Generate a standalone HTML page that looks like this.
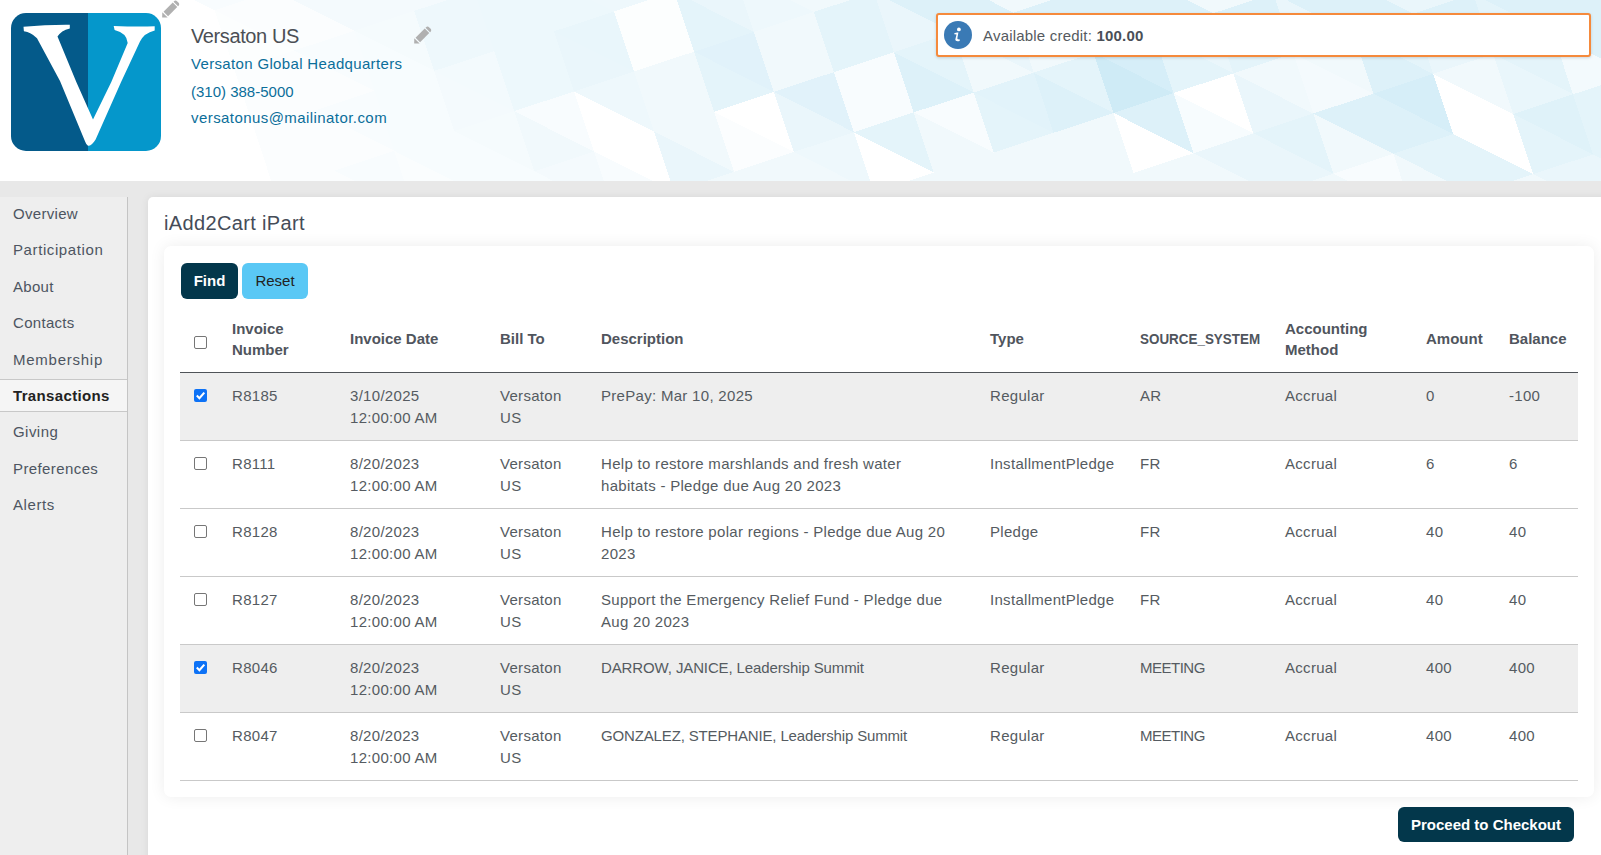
<!DOCTYPE html>
<html><head><meta charset="utf-8"><style>
*{box-sizing:border-box;margin:0;padding:0}
html,body{width:1601px;height:855px;overflow:hidden;background:#fff;font-family:"Liberation Sans",sans-serif}
.abs{position:absolute;white-space:nowrap}
#hdr{position:absolute;left:0;top:0;width:1601px;height:181px;overflow:hidden;background:#fff}
#band{position:absolute;left:0;top:181px;width:1601px;height:674px;background:#e8e8e8}
#side{position:absolute;left:0;top:197px;width:128px;height:658px;background:#eeeeee;border-right:1px solid #c4c4c4}
#gap{position:absolute;left:128px;top:197px;width:20px;height:658px;background:#e8e8e8}
#main{position:absolute;left:148px;top:197px;width:1460px;height:670px;background:#fff;border-top-left-radius:5px;box-shadow:0 0 8px rgba(0,0,0,0.07)}
.nav{position:absolute;left:13px;font-size:15px;letter-spacing:0.3px;color:#4d5561}
.card{position:absolute;left:164px;top:246px;width:1430px;height:551px;background:#fff;border-radius:7px;box-shadow:0 0 16px rgba(0,0,0,0.075)}
.btn{position:absolute;border-radius:6px;font-size:15px;text-align:center}
.th{position:absolute;font-size:15px;font-weight:bold;color:#50555d;line-height:21px;white-space:nowrap}
.td{position:absolute;font-size:15px;color:#555b61;line-height:22px;letter-spacing:0.3px;white-space:nowrap}
.row{position:absolute;left:180px;width:1398px;height:68px;border-bottom:1px solid #c9c9c9}
.cb{position:absolute;width:13px;height:13px;border:1px solid #767676;border-radius:2px;background:#fff}
.cbc{position:absolute;width:13px;height:13px;border-radius:2px;background:#0d72f6}
</style></head>
<body>
<div id="hdr"><svg width="1601" height="181" style="position:absolute;left:0;top:0" shape-rendering="crispEdges"><polygon points="254.5,130.4 334.4,170.7 274.5,190.5" fill="#fbfdfe"/><polygon points="274.5,190.5 334.4,170.7 354.4,230.8" fill="#fbfdfe"/><polygon points="334.4,170.7 414.3,211.0 354.4,230.8" fill="#fbfdfe"/><polygon points="234.5,70.4 314.4,110.6 254.5,130.4" fill="#fbfdfe"/><polygon points="254.5,130.4 314.4,110.6 334.4,170.7" fill="#fbfdfe"/><polygon points="314.4,110.6 394.3,150.9 334.4,170.7" fill="#fbfdfe"/><polygon points="334.4,170.7 394.3,150.9 414.3,211.0" fill="#f8fcfe"/><polygon points="394.3,150.9 474.3,191.1 414.3,211.0" fill="#fafdfe"/><polygon points="214.5,10.3 294.4,50.5 234.5,70.4" fill="#fcfefe"/><polygon points="234.5,70.4 294.4,50.5 314.4,110.6" fill="#fbfdfe"/><polygon points="294.4,50.5 374.3,90.8 314.4,110.6" fill="#fbfdfe"/><polygon points="314.4,110.6 374.3,90.8 394.3,150.9" fill="#f8fcfe"/><polygon points="374.3,90.8 454.3,131.0 394.3,150.9" fill="#f7fcfe"/><polygon points="394.3,150.9 454.3,131.0 474.3,191.1" fill="#f7fcfe"/><polygon points="454.3,131.0 534.2,171.3 474.3,191.1" fill="#f7fcfe"/><polygon points="474.3,191.1 534.2,171.3 554.2,231.4" fill="#f7fcfe"/><polygon points="534.2,171.3 614.1,211.5 554.2,231.4" fill="#f7fcfe"/><polygon points="134.6,-30.0 194.5,-49.8 214.5,10.3" fill="#f8fcfe"/><polygon points="194.5,-49.8 274.4,-9.6 214.5,10.3" fill="#f8fcfe"/><polygon points="214.5,10.3 274.4,-9.6 294.4,50.5" fill="#fbfdfe"/><polygon points="274.4,-9.6 354.3,30.7 294.4,50.5" fill="#fbfdfe"/><polygon points="294.4,50.5 354.3,30.7 374.3,90.8" fill="#f8fcfe"/><polygon points="354.3,30.7 434.3,70.9 374.3,90.8" fill="#f7fcfe"/><polygon points="374.3,90.8 434.3,70.9 454.3,131.0" fill="#f7fcfe"/><polygon points="434.3,70.9 514.2,111.2 454.3,131.0" fill="#f4fafd"/><polygon points="454.3,131.0 514.2,111.2 534.2,171.3" fill="#f5fbfd"/><polygon points="514.2,111.2 594.1,151.5 534.2,171.3" fill="#f1f9fc"/><polygon points="534.2,171.3 594.1,151.5 614.1,211.5" fill="#f4fafd"/><polygon points="594.1,151.5 674.0,191.7 614.1,211.5" fill="#f8fcfe"/><polygon points="274.4,-9.6 334.4,-29.4 354.3,30.7" fill="#f4fafd"/><polygon points="334.4,-29.4 414.3,10.9 354.3,30.7" fill="#f4fafd"/><polygon points="354.3,30.7 414.3,10.9 434.3,70.9" fill="#f5fbfd"/><polygon points="414.3,10.9 494.2,51.1 434.3,70.9" fill="#eef8fc"/><polygon points="434.3,70.9 494.2,51.1 514.2,111.2" fill="#f3fafd"/><polygon points="494.2,51.1 574.1,91.4 514.2,111.2" fill="#edf8fc"/><polygon points="514.2,111.2 574.1,91.4 594.1,151.5" fill="#f8fcfe"/><polygon points="654.0,131.6 734.0,171.9 674.0,191.7" fill="#eaf6fb"/><polygon points="674.0,191.7 734.0,171.9 754.0,232.0" fill="#f1f9fc"/><polygon points="734.0,171.9 813.9,212.1 754.0,232.0" fill="#f1f9fc"/><polygon points="334.4,-29.4 394.3,-49.2 414.3,10.9" fill="#f4fafd"/><polygon points="394.3,-49.2 474.2,-9.0 414.3,10.9" fill="#f4fafd"/><polygon points="414.3,10.9 474.2,-9.0 494.2,51.1" fill="#eef8fc"/><polygon points="474.2,-9.0 554.1,31.3 494.2,51.1" fill="#edf8fc"/><polygon points="494.2,51.1 554.1,31.3 574.1,91.4" fill="#edf8fc"/><polygon points="554.1,31.3 634.1,71.5 574.1,91.4" fill="#eaf6fb"/><polygon points="574.1,91.4 634.1,71.5 654.0,131.6" fill="#eef8fc"/><polygon points="634.1,71.5 714.0,111.8 654.0,131.6" fill="#f1f9fc"/><polygon points="654.0,131.6 714.0,111.8 734.0,171.9" fill="#f1f9fc"/><polygon points="714.0,111.8 793.9,152.0 734.0,171.9" fill="#fbfdfe"/><polygon points="734.0,171.9 793.9,152.0 813.9,212.1" fill="#f1f9fc"/><polygon points="793.9,152.0 873.8,192.3 813.9,212.1" fill="#f1f9fc"/><polygon points="474.2,-9.0 534.1,-28.8 554.1,31.3" fill="#edf8fc"/><polygon points="534.1,-28.8 614.1,11.4 554.1,31.3" fill="#edf8fc"/><polygon points="554.1,31.3 614.1,11.4 634.1,71.5" fill="#e9f6fb"/><polygon points="614.1,11.4 694.0,51.7 634.1,71.5" fill="#fcfefe"/><polygon points="634.1,71.5 694.0,51.7 714.0,111.8" fill="#f1f9fc"/><polygon points="694.0,51.7 773.9,91.9 714.0,111.8" fill="#e4f4fa"/><polygon points="773.9,91.9 853.8,132.2 793.9,152.0" fill="#eaf6fb"/><polygon points="793.9,152.0 853.8,132.2 873.8,192.3" fill="#eef8fc"/><polygon points="873.8,192.3 933.8,172.5 953.8,232.5" fill="#f1f9fc"/><polygon points="933.8,172.5 1013.7,212.7 953.8,232.5" fill="#f1f9fc"/><polygon points="534.1,-28.8 594.1,-48.6 614.1,11.4" fill="#eef8fc"/><polygon points="594.1,-48.6 674.0,-8.4 614.1,11.4" fill="#eef8fc"/><polygon points="614.1,11.4 674.0,-8.4 694.0,51.7" fill="#fcfefe"/><polygon points="674.0,-8.4 753.9,31.9 694.0,51.7" fill="#e4f4fa"/><polygon points="694.0,51.7 753.9,31.9 773.9,91.9" fill="#e1f2fa"/><polygon points="753.9,31.9 833.8,72.1 773.9,91.9" fill="#f1f9fc"/><polygon points="773.9,91.9 833.8,72.1 853.8,132.2" fill="#e1f2fa"/><polygon points="833.8,72.1 913.8,112.4 853.8,132.2" fill="#f8fcfe"/><polygon points="853.8,132.2 913.8,112.4 933.8,172.5" fill="#e4f4fa"/><polygon points="913.8,112.4 993.7,152.6 933.8,172.5" fill="#f1f9fc"/><polygon points="933.8,172.5 993.7,152.6 1013.7,212.7" fill="#f1f9fc"/><polygon points="993.7,152.6 1073.6,192.9 1013.7,212.7" fill="#f1f9fc"/><polygon points="674.0,-8.4 733.9,-28.2 753.9,31.9" fill="#eaf6fb"/><polygon points="733.9,-28.2 813.8,12.0 753.9,31.9" fill="#eef8fc"/><polygon points="753.9,31.9 813.8,12.0 833.8,72.1" fill="#f1f9fc"/><polygon points="813.8,12.0 893.8,52.3 833.8,72.1" fill="#e4f4fa"/><polygon points="833.8,72.1 893.8,52.3 913.8,112.4" fill="#f8fcfe"/><polygon points="893.8,52.3 973.7,92.5 913.8,112.4" fill="#ddf1f9"/><polygon points="913.8,112.4 973.7,92.5 993.7,152.6" fill="#f8fcfe"/><polygon points="973.7,92.5 1053.6,132.8 993.7,152.6" fill="#e4f4fa"/><polygon points="993.7,152.6 1053.6,132.8 1073.6,192.9" fill="#f1f9fc"/><polygon points="1053.6,132.8 1133.5,173.0 1073.6,192.9" fill="#f1f9fc"/><polygon points="1073.6,192.9 1133.5,173.0 1153.5,233.1" fill="#f1f9fc"/><polygon points="1133.5,173.0 1213.5,213.3 1153.5,233.1" fill="#f1f9fc"/><polygon points="733.9,-28.2 793.9,-48.1 813.8,12.0" fill="#f1f9fc"/><polygon points="793.9,-48.1 873.8,-7.8 813.8,12.0" fill="#f1f9fc"/><polygon points="813.8,12.0 873.8,-7.8 893.8,52.3" fill="#e4f4fa"/><polygon points="873.8,-7.8 953.7,32.4 893.8,52.3" fill="#eaf6fb"/><polygon points="893.8,52.3 953.7,32.4 973.7,92.5" fill="#e4f4fa"/><polygon points="953.7,32.4 1033.6,72.7 973.7,92.5" fill="#f1f9fc"/><polygon points="973.7,92.5 1033.6,72.7 1053.6,132.8" fill="#e2f3fa"/><polygon points="1033.6,72.7 1113.6,113.0 1053.6,132.8" fill="#ddf1f9"/><polygon points="1053.6,132.8 1113.6,113.0 1133.5,173.0" fill="#f1f9fc"/><polygon points="1133.5,173.0 1193.5,153.2 1213.5,213.3" fill="#f1f9fc"/><polygon points="1193.5,153.2 1273.4,193.5 1213.5,213.3" fill="#f1f9fc"/><polygon points="873.8,-7.8 933.7,-27.6 953.7,32.4" fill="#ddf1f9"/><polygon points="933.7,-27.6 1013.6,12.6 953.7,32.4" fill="#ddf1f9"/><polygon points="953.7,32.4 1013.6,12.6 1033.6,72.7" fill="#eaf6fb"/><polygon points="1013.6,12.6 1093.6,52.9 1033.6,72.7" fill="#f1f9fc"/><polygon points="1033.6,72.7 1093.6,52.9 1113.6,113.0" fill="#e4f4fa"/><polygon points="1093.6,52.9 1173.5,93.1 1113.6,113.0" fill="#cfebf6"/><polygon points="1113.6,113.0 1173.5,93.1 1193.5,153.2" fill="#ddf1f9"/><polygon points="1173.5,93.1 1253.4,133.4 1193.5,153.2" fill="#f7fcfe"/><polygon points="1193.5,153.2 1253.4,133.4 1273.4,193.5" fill="#eaf6fb"/><polygon points="1253.4,133.4 1333.3,173.6 1273.4,193.5" fill="#eaf6fb"/><polygon points="1273.4,193.5 1333.3,173.6 1353.3,233.7" fill="#f1f9fc"/><polygon points="1333.3,173.6 1413.3,213.9 1353.3,233.7" fill="#f1f9fc"/><polygon points="933.7,-27.6 993.6,-47.5 1013.6,12.6" fill="#f1f9fc"/><polygon points="993.6,-47.5 1073.6,-7.2 1013.6,12.6" fill="#f1f9fc"/><polygon points="1013.6,12.6 1073.6,-7.2 1093.6,52.9" fill="#ddf1f9"/><polygon points="1073.6,-7.2 1153.5,33.0 1093.6,52.9" fill="#ddf1f9"/><polygon points="1093.6,52.9 1153.5,33.0 1173.5,93.1" fill="#d6eef8"/><polygon points="1153.5,33.0 1233.4,73.3 1173.5,93.1" fill="#e4f4fa"/><polygon points="1233.4,73.3 1313.3,113.5 1253.4,133.4" fill="#eaf6fb"/><polygon points="1253.4,133.4 1313.3,113.5 1333.3,173.6" fill="#e4f4fa"/><polygon points="1313.3,113.5 1393.3,153.8 1333.3,173.6" fill="#f1f9fc"/><polygon points="1333.3,173.6 1393.3,153.8 1413.3,213.9" fill="#f8fcfe"/><polygon points="1393.3,153.8 1473.2,194.0 1413.3,213.9" fill="#f1f9fc"/><polygon points="1073.6,-7.2 1133.5,-27.1 1153.5,33.0" fill="#ddf1f9"/><polygon points="1133.5,-27.1 1213.4,13.2 1153.5,33.0" fill="#ddf1f9"/><polygon points="1153.5,33.0 1213.4,13.2 1233.4,73.3" fill="#eaf6fb"/><polygon points="1213.4,13.2 1293.3,53.5 1233.4,73.3" fill="#e4f4fa"/><polygon points="1233.4,73.3 1293.3,53.5 1313.3,113.5" fill="#f1f9fc"/><polygon points="1293.3,53.5 1373.3,93.7 1313.3,113.5" fill="#f4fafd"/><polygon points="1313.3,113.5 1373.3,93.7 1393.3,153.8" fill="#ddf1f9"/><polygon points="1373.3,93.7 1453.2,134.0 1393.3,153.8" fill="#ddf1f9"/><polygon points="1393.3,153.8 1453.2,134.0 1473.2,194.0" fill="#e4f4fa"/><polygon points="1453.2,134.0 1533.1,174.2 1473.2,194.0" fill="#e4f4fa"/><polygon points="1473.2,194.0 1533.1,174.2 1553.1,234.3" fill="#f1f9fc"/><polygon points="1533.1,174.2 1613.0,214.5 1553.1,234.3" fill="#f1f9fc"/><polygon points="1133.5,-27.1 1193.4,-46.9 1213.4,13.2" fill="#f1f9fc"/><polygon points="1193.4,-46.9 1273.4,-6.6 1213.4,13.2" fill="#f1f9fc"/><polygon points="1213.4,13.2 1273.4,-6.6 1293.3,53.5" fill="#ddf1f9"/><polygon points="1273.4,-6.6 1353.3,33.6 1293.3,53.5" fill="#eaf6fb"/><polygon points="1293.3,53.5 1353.3,33.6 1373.3,93.7" fill="#f1f9fc"/><polygon points="1353.3,33.6 1433.2,73.9 1373.3,93.7" fill="#ddf1f9"/><polygon points="1373.3,93.7 1433.2,73.9 1453.2,134.0" fill="#d6eef8"/><polygon points="1513.1,114.1 1593.0,154.4 1533.1,174.2" fill="#e4f4fa"/><polygon points="1533.1,174.2 1593.0,154.4 1613.0,214.5" fill="#eaf6fb"/><polygon points="1593.0,154.4 1673.0,194.6 1613.0,214.5" fill="#eaf6fb"/><polygon points="1273.4,-6.6 1333.3,-26.5 1353.3,33.6" fill="#ddf1f9"/><polygon points="1333.3,-26.5 1413.2,13.8 1353.3,33.6" fill="#ddf1f9"/><polygon points="1353.3,33.6 1413.2,13.8 1433.2,73.9" fill="#e4f4fa"/><polygon points="1413.2,13.8 1493.1,54.0 1433.2,73.9" fill="#eaf6fb"/><polygon points="1433.2,73.9 1493.1,54.0 1513.1,114.1" fill="#f1f9fc"/><polygon points="1493.1,54.0 1573.1,94.3 1513.1,114.1" fill="#e9f6fb"/><polygon points="1513.1,114.1 1573.1,94.3 1593.0,154.4" fill="#dff2f9"/><polygon points="1573.1,94.3 1653.0,134.5 1593.0,154.4" fill="#e4f4fa"/><polygon points="1593.0,154.4 1653.0,134.5 1673.0,194.6" fill="#e4f4fa"/><polygon points="1333.3,-26.5 1393.2,-46.3 1413.2,13.8" fill="#eaf6fb"/><polygon points="1393.2,-46.3 1473.1,-6.0 1413.2,13.8" fill="#eaf6fb"/><polygon points="1413.2,13.8 1473.1,-6.0 1493.1,54.0" fill="#ddf1f9"/><polygon points="1473.1,-6.0 1553.1,34.2 1493.1,54.0" fill="#e4f4fa"/><polygon points="1493.1,54.0 1553.1,34.2 1573.1,94.3" fill="#e4f4fa"/><polygon points="1553.1,34.2 1633.0,74.5 1573.1,94.3" fill="#f3fafd"/><polygon points="1573.1,94.3 1633.0,74.5 1653.0,134.5" fill="#e4f4fa"/><polygon points="1473.1,-6.0 1533.1,-25.9 1553.1,34.2" fill="#ddf1f9"/><polygon points="1533.1,-25.9 1613.0,14.4 1553.1,34.2" fill="#ddf1f9"/><polygon points="1553.1,34.2 1613.0,14.4 1633.0,74.5" fill="#ddf1f9"/><polygon points="1533.1,-25.9 1593.0,-45.7 1613.0,14.4" fill="#ddf1f9"/><polygon points="1593.0,-45.7 1672.9,-5.5 1613.0,14.4" fill="#ddf1f9"/></svg></div>
<div id="band"></div><div id="side"></div><div id="gap"></div><div id="main"></div>
<svg class="abs" style="left:11px;top:13px" width="150" height="138" viewBox="0 0 150 138">
<defs><clipPath id="lc"><rect x="0" y="0" width="150" height="138" rx="15" ry="15"/></clipPath></defs>
<g clip-path="url(#lc)"><rect x="0" y="0" width="77" height="138" fill="#045a8a"/><rect x="77" y="0" width="73" height="138" fill="#0597cb"/></g>
<path fill="#fff" d="M12.5 13.7 Q36 11.5 58.8 11.7 L58.8 15.4 Q50 17.5 46.5 23.6 L65.3 69 L82 106.5 L100.3 69 L116.7 30.1 Q116 20 103.6 17 L102.7 12.9 Q124 13.8 143.7 13.3 L143.7 17.4 Q133 20 129 28.5 L110.1 69 L84.6 126.6 Q80 134 76.7 132.4 Q75 131 74.1 128.4 L49 68 L26 25.2 Q20 19 12.9 18.2 Z"/>
</svg>
<svg style="position:absolute;left:162px;top:0px" width="18" height="18" viewBox="0 0 18 18">
<g fill="#b0b0b0" transform="translate(0.2,17.6) rotate(-45)">
<path d="M0 0 L3.9 -3.8 L3.9 3.8 Z"/>
<rect x="5.1" y="-3.2" width="13" height="6.4"/>
<path d="M19.2 -3.2 L19.6 -3.2 Q22.1 -3.2 22.1 -0.8 L22.1 0.8 Q22.1 3.2 19.6 3.2 L19.2 3.2 Z"/>
</g></svg>
<svg style="position:absolute;left:414px;top:26px" width="18" height="18" viewBox="0 0 18 18">
<g fill="#b0b0b0" transform="translate(0.2,17.6) rotate(-45)">
<path d="M0 0 L3.9 -3.8 L3.9 3.8 Z"/>
<rect x="5.1" y="-3.2" width="13" height="6.4"/>
<path d="M19.2 -3.2 L19.6 -3.2 Q22.1 -3.2 22.1 -0.8 L22.1 0.8 Q22.1 3.2 19.6 3.2 L19.2 3.2 Z"/>
</g></svg>
<div class="abs" style="left:191px;top:23.6px;font-size:20px;letter-spacing:-0.4px;color:#4b4f55;line-height:24px">Versaton US</div>
<div class="abs" style="left:191px;top:54.4px;font-size:15px;letter-spacing:0.34px;color:#0b6e9a;line-height:20px">Versaton Global Headquarters</div>
<div class="abs" style="left:191px;top:81.5px;font-size:15px;letter-spacing:0px;color:#0b6e9a;line-height:20px">(310) 388-5000</div>
<div class="abs" style="left:191px;top:107.6px;font-size:15px;letter-spacing:0.43px;color:#0b6e9a;line-height:20px">versatonus@mailinator.com</div>
<div class="abs" style="left:936px;top:13px;width:655px;height:44px;background:#fff;border:2px solid #f58a3c;border-radius:3px;box-shadow:0 1px 3px rgba(0,0,0,0.15)"></div>
<svg class="abs" style="left:944px;top:21px" width="28" height="28" viewBox="0 0 28 28"><circle cx="14" cy="14" r="14" fill="#3a7ab5"/><circle cx="14.9" cy="8.4" r="1.9" fill="#fff"/><path fill="#fff" d="M10.1 12.5 Q12.3 11.1 14.4 11.5 L13.3 17.4 Q13.2 18.5 15.9 18.6 L15.6 19.9 Q11.2 20.8 11.3 18.4 L12.5 13.6 Q11.5 13.2 10.3 13.3 Z"/></svg>
<div class="abs" style="left:983px;top:26px;font-size:15px;letter-spacing:0.2px;color:#555a60;line-height:20px">Available credit: <b style="color:#4a4f57">100.00</b></div>
<div class="nav" style="top:204.0px;line-height:20px;letter-spacing:0.3px">Overview</div>
<div class="nav" style="top:240.4px;line-height:20px;letter-spacing:0.6px">Participation</div>
<div class="nav" style="top:276.8px;line-height:20px;letter-spacing:0.3px">About</div>
<div class="nav" style="top:313.2px;line-height:20px;letter-spacing:0.3px">Contacts</div>
<div class="nav" style="top:349.6px;line-height:20px;letter-spacing:0.75px">Membership</div>
<div class="abs" style="left:0;top:379px;width:127px;height:33px;background:#f5f5f5;border-top:1px solid #c8c8c8;border-bottom:1px solid #c8c8c8"></div>
<div class="nav" style="top:386.0px;line-height:20px;font-weight:bold;color:#222;letter-spacing:0.35px">Transactions</div>
<div class="nav" style="top:422.4px;line-height:20px;letter-spacing:0.45px">Giving</div>
<div class="nav" style="top:458.79999999999995px;line-height:20px;letter-spacing:0.4px">Preferences</div>
<div class="nav" style="top:495.2px;line-height:20px;letter-spacing:0.6px">Alerts</div>
<div class="abs" style="left:164px;top:211px;font-size:20px;color:#454c58;line-height:24px;letter-spacing:0.35px">iAdd2Cart iPart</div>
<div class="card"></div>
<div class="btn" style="left:181px;top:263px;width:57px;height:36px;background:#03374b;color:#fff;font-weight:bold;line-height:36px">Find</div>
<div class="btn" style="left:242px;top:263px;width:66px;height:36px;background:#5ac8f5;color:#222;line-height:36px">Reset</div>
<div class="abs" style="left:180px;top:372px;width:1398px;height:1px;background:#4f5358"></div>
<div class="cb" style="left:194px;top:336px"></div>
<div class="th" style="left:232px;top:318.2px;">Invoice<br>Number</div>
<div class="th" style="left:350px;top:328.3px;">Invoice Date</div>
<div class="th" style="left:500px;top:328.3px;">Bill To</div>
<div class="th" style="left:601px;top:328.3px;">Description</div>
<div class="th" style="left:990px;top:328.3px;">Type</div>
<div class="th" style="left:1140px;top:328.3px;transform:scaleX(0.895);transform-origin:0 0;">SOURCE_SYSTEM</div>
<div class="th" style="left:1285px;top:318.2px;">Accounting<br>Method</div>
<div class="th" style="left:1426px;top:328.3px;">Amount</div>
<div class="th" style="left:1509px;top:328.3px;">Balance</div>
<div class="row" style="top:373px;background:#eeeeee"></div>
<div class="cbc" style="left:194px;top:389px"><svg width="13" height="13" viewBox="0 0 13 13" style="position:absolute;left:0;top:0"><path d="M2.8 6.6 L5.4 9.2 L10.3 3.6" fill="none" stroke="#fff" stroke-width="2.1"/></svg></div>
<div class="td" style="left:232px;top:385px;">R8185</div>
<div class="td" style="left:350px;top:385px;">3/10/2025<br>12:00:00 AM</div>
<div class="td" style="left:500px;top:385px;">Versaton<br>US</div>
<div class="td" style="left:601px;top:385px;">PrePay: Mar 10, 2025</div>
<div class="td" style="left:990px;top:385px;">Regular</div>
<div class="td" style="left:1140px;top:385px;">AR</div>
<div class="td" style="left:1285px;top:385px;">Accrual</div>
<div class="td" style="left:1426px;top:385px;">0</div>
<div class="td" style="left:1509px;top:385px;">-100</div>
<div class="row" style="top:441px;background:#fff"></div>
<div class="cb" style="left:194px;top:457px"></div>
<div class="td" style="left:232px;top:453px;">R8111</div>
<div class="td" style="left:350px;top:453px;">8/20/2023<br>12:00:00 AM</div>
<div class="td" style="left:500px;top:453px;">Versaton<br>US</div>
<div class="td" style="left:601px;top:453px;">Help to restore marshlands and fresh water<br>habitats - Pledge due Aug 20 2023</div>
<div class="td" style="left:990px;top:453px;">InstallmentPledge</div>
<div class="td" style="left:1140px;top:453px;">FR</div>
<div class="td" style="left:1285px;top:453px;">Accrual</div>
<div class="td" style="left:1426px;top:453px;">6</div>
<div class="td" style="left:1509px;top:453px;">6</div>
<div class="row" style="top:509px;background:#fff"></div>
<div class="cb" style="left:194px;top:525px"></div>
<div class="td" style="left:232px;top:521px;">R8128</div>
<div class="td" style="left:350px;top:521px;">8/20/2023<br>12:00:00 AM</div>
<div class="td" style="left:500px;top:521px;">Versaton<br>US</div>
<div class="td" style="left:601px;top:521px;">Help to restore polar regions - Pledge due Aug 20<br>2023</div>
<div class="td" style="left:990px;top:521px;">Pledge</div>
<div class="td" style="left:1140px;top:521px;">FR</div>
<div class="td" style="left:1285px;top:521px;">Accrual</div>
<div class="td" style="left:1426px;top:521px;">40</div>
<div class="td" style="left:1509px;top:521px;">40</div>
<div class="row" style="top:577px;background:#fff"></div>
<div class="cb" style="left:194px;top:593px"></div>
<div class="td" style="left:232px;top:589px;">R8127</div>
<div class="td" style="left:350px;top:589px;">8/20/2023<br>12:00:00 AM</div>
<div class="td" style="left:500px;top:589px;">Versaton<br>US</div>
<div class="td" style="left:601px;top:589px;">Support the Emergency Relief Fund - Pledge due<br>Aug 20 2023</div>
<div class="td" style="left:990px;top:589px;">InstallmentPledge</div>
<div class="td" style="left:1140px;top:589px;">FR</div>
<div class="td" style="left:1285px;top:589px;">Accrual</div>
<div class="td" style="left:1426px;top:589px;">40</div>
<div class="td" style="left:1509px;top:589px;">40</div>
<div class="row" style="top:645px;background:#eeeeee"></div>
<div class="cbc" style="left:194px;top:661px"><svg width="13" height="13" viewBox="0 0 13 13" style="position:absolute;left:0;top:0"><path d="M2.8 6.6 L5.4 9.2 L10.3 3.6" fill="none" stroke="#fff" stroke-width="2.1"/></svg></div>
<div class="td" style="left:232px;top:657px;">R8046</div>
<div class="td" style="left:350px;top:657px;">8/20/2023<br>12:00:00 AM</div>
<div class="td" style="left:500px;top:657px;">Versaton<br>US</div>
<div class="td" style="left:601px;top:657px;letter-spacing:-0.12px;">DARROW, JANICE, Leadership Summit</div>
<div class="td" style="left:990px;top:657px;">Regular</div>
<div class="td" style="left:1140px;top:657px;letter-spacing:-0.5px;">MEETING</div>
<div class="td" style="left:1285px;top:657px;">Accrual</div>
<div class="td" style="left:1426px;top:657px;">400</div>
<div class="td" style="left:1509px;top:657px;">400</div>
<div class="row" style="top:713px;background:#fff"></div>
<div class="cb" style="left:194px;top:729px"></div>
<div class="td" style="left:232px;top:725px;">R8047</div>
<div class="td" style="left:350px;top:725px;">8/20/2023<br>12:00:00 AM</div>
<div class="td" style="left:500px;top:725px;">Versaton<br>US</div>
<div class="td" style="left:601px;top:725px;letter-spacing:-0.15px;">GONZALEZ, STEPHANIE, Leadership Summit</div>
<div class="td" style="left:990px;top:725px;">Regular</div>
<div class="td" style="left:1140px;top:725px;letter-spacing:-0.5px;">MEETING</div>
<div class="td" style="left:1285px;top:725px;">Accrual</div>
<div class="td" style="left:1426px;top:725px;">400</div>
<div class="td" style="left:1509px;top:725px;">400</div>
<div class="btn" style="left:1398px;top:807px;width:176px;height:35px;background:#03374b;color:#fff;font-weight:bold;line-height:35px">Proceed to Checkout</div>
</body></html>
